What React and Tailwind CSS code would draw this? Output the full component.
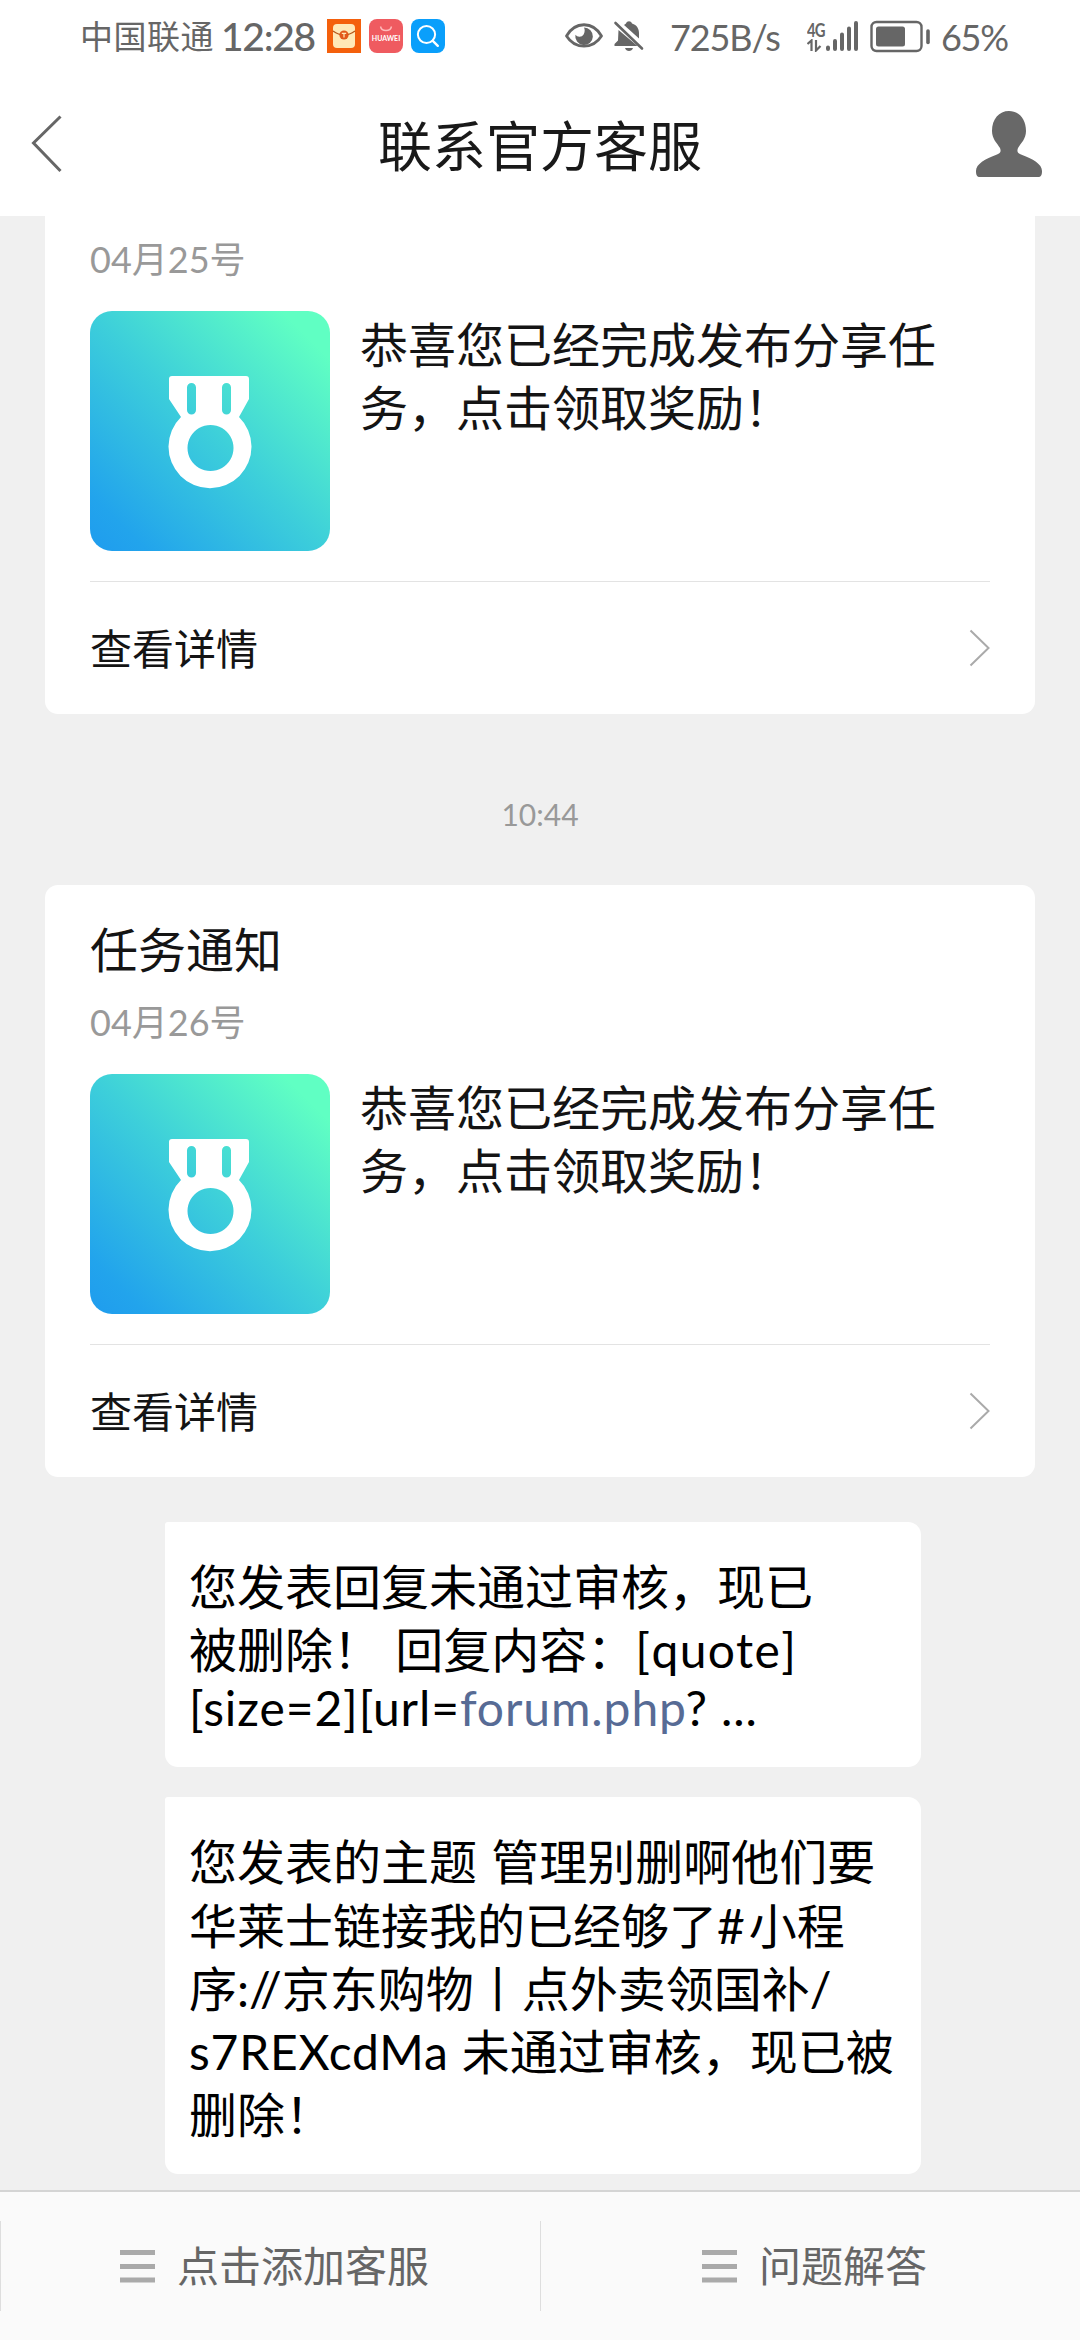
function StatusBar() {
  return (
    <div className="flex h-[72px] shrink-0 items-center pl-[80px] text-[#666]">
      <span className="w-[141px] whitespace-nowrap text-[33px] leading-[40px] tracking-[0.5px]">中国联通</span>
      <span className="w-[106px] whitespace-nowrap text-[39px] font-medium leading-[40px] tracking-[-1.3px]">12:28</span>
      <svg className="mr-2 h-[34px] w-[34px]" viewBox="0 0 34 34">
        <rect width="34" height="34" fill="#f4600c" />
        <rect x="6" y="5" width="22" height="24" rx="4" fill="#ffe9b8" />
        <path d="M6 12Q17 20 28 12" fill="none" stroke="#b5571b" strokeWidth="1.5" />
        <circle cx="17" cy="16" r="4.6" fill="#e2581b" />
        <path d="M14.8 14.4h4.4M17 14.4v4" stroke="#ffe9b8" strokeWidth="1.2" />
      </svg>
      <span className="relative mr-2 h-[34px] w-[34px] rounded-[8px] bg-[#ef5b60]">
        <svg className="absolute inset-0" viewBox="0 0 34 34">
          <path d="M11.5 7.5a5.6 5 0 0 0 11 0" fill="none" stroke="#fbb" strokeWidth="1.4" />
        </svg>
        <span className="absolute left-0 top-[15px] w-[34px] text-center text-[7px] font-bold leading-[9px] text-white">HUAWEI</span>
      </span>
      <svg className="h-[34px] w-[34px]" viewBox="0 0 34 34">
        <rect width="34" height="34" rx="8" fill="#0a9ffb" />
        <circle cx="15.5" cy="15.5" r="8.6" fill="none" stroke="#fff" strokeWidth="2" />
        <path d="M21.8 21.8l5 5" stroke="#fff" strokeWidth="2.4" strokeLinecap="round" />
      </svg>
      <svg className="ml-[119px] h-[28px] w-[40px]" viewBox="0 0 40 28">
        <path d="M2.5 14C11-1 29-1 37.500 14C29 27.500 11 27.500 2.500 14Z" fill="none" stroke="currentColor" strokeWidth="2.8" strokeLinejoin="round" />
        <path d="M20 5.500a8.800 8.800 0 1 1-8.600 7.300a5 5 0 0 0 8.200-.4c1.500-2.400 1.300-5 .4-6.900Z" fill="currentColor" />
      </svg>
      <svg className="ml-[9px] h-[34px] w-[32px]" viewBox="0 0 32 34">
        <path d="M13 4.500C14 1.500 18 1.500 19 4.500C24 6 26 10 26 14v5.500L11 6ZM5.500 11L24.500 27H1.500v-2L5 21.500ZM12 29h8c-1 4-7 4-8 0Z" fill="currentColor" />
        <path d="M2.500 4L29 29.500" stroke="currentColor" strokeWidth="2.600" strokeLinecap="round" />
      </svg>
      <span className="ml-[25px] w-[137px] whitespace-nowrap pt-[2px] text-[36px] leading-[40px] tracking-[-1.1px]">725B/s</span>
      <span className="flex w-[19px] flex-col">
        <span className="whitespace-nowrap text-[19px] font-bold leading-[18px] tracking-[-1px]">
          <span className="inline-block w-[18px] origin-left scale-x-[0.78]">4G</span>
        </span>
        <svg className="h-[13px] w-[16px]" viewBox="0 0 16 13">
          <path d="M0.500 5L4.500 1.500V12M9 1v10.500L13.500 7" fill="none" stroke="currentColor" strokeWidth="2.200" />
        </svg>
      </span>
      <svg className="-ml-px h-[32px] w-[34px]" viewBox="0 0 34 32">
        <path d="M3 27.500v1.500M10 21v8M17 14.500v14.500M24 8.500v20.500M31 3v26" stroke="currentColor" strokeWidth="4" strokeLinecap="round" />
      </svg>
      <svg className="ml-[11px] h-[33px] w-[61px]" viewBox="0 0 61 33">
        <rect x="1.500" y="2" width="50" height="29" rx="5" fill="none" stroke="currentColor" strokeWidth="2.400" />
        <rect x="6" y="6.500" width="29" height="20" rx="2.500" fill="currentColor" />
        <path d="M58 11v11.500" stroke="currentColor" strokeWidth="3.600" strokeLinecap="round" />
      </svg>
      <span className="ml-[10px] whitespace-nowrap pt-[2px] text-[36px] leading-[40px] tracking-[-1.3px]">65%</span>
    </div>
  );
}

function Header() {
  return (
    <div className="flex h-[144px] shrink-0 items-center justify-between pl-[30px] pr-[37px]">
      <svg className="h-[60px] w-[68px]" viewBox="0 0 68 60">
        <path d="M30.500 2.500L3.500 29L30.500 57" fill="none" stroke="#666" strokeWidth="3" />
      </svg>
      <h1 className="pl-[7px] pt-[6px] text-[54px] leading-[60px] text-[#191919]">联系官方客服</h1>
      <svg className="h-[68px] w-[68px]" viewBox="0 0 68 68">
        <path d="M34 1C44 1 51 9 51 21C51 29 46 33 43 38C41.500 42 43 43 46 44.500C58 49 67 54 67 61C67 65 66 67 63 67H5C2 67 1 65 1 61C1 54 10 49 22 44.500C25 43 26.500 42 25 38C22 33 17 29 17 21C17 9 24 1 34 1Z" fill="#686868" />
      </svg>
    </div>
  );
}

function Medal() {
  return (
    <div className="h-[240px] w-[240px] shrink-0 overflow-hidden rounded-[22px] bg-[linear-gradient(45deg,#1f9cee_0%,#22a4ec_12%,#3dcfda_50%,#60ffc3_90%,#60ffc3_100%)]">
      <svg viewBox="0 0 240 240">
        <path
          fillRule="evenodd"
          fill="#fff"
          d="M82 65H156Q159 65 159 68V88L149 106A41.500 41.500 0 1 1 91 106L79 88V68Q79 65 82 65ZM101.500 72a4.500 4.500 0 0 0-4.500 4.500V99a4.500 4.500 0 0 0 9 0V76.500a4.500 4.500 0 0 0-4.500-4.500ZM136.500 72a4.500 4.500 0 0 0-4.500 4.500V99a4.500 4.500 0 0 0 9 0V76.500a4.500 4.500 0 0 0-4.500-4.500ZM120.500 114a23 23 0 1 0 .01 0Z"
        />
      </svg>
    </div>
  );
}

function NoticeCard({ title, date }) {
  return (
    <section className={title ? "rounded-[13px] bg-white px-[45px] pt-[33px]" : "rounded-b-[13px] bg-white px-[45px] pt-[19px]"}>
      {title && <h2 className="mb-[17px] text-[48px] leading-[63px] text-[#141414]">{title}</h2>}
      <p className="text-[36px] leading-[48px] text-[#999]">{date}</p>
      <div className="mt-[28px] flex gap-[30px]">
        <Medal />
        <p className="mt-[2px] text-[48px] leading-[63px] text-[#141414]">
          恭喜您已经完成发布分享任
          <br />
          务，点击领取奖励！
        </p>
      </div>
      <div className="mt-[30px] flex h-[133px] items-center justify-between border-t border-[#e3e3e3]">
        <span className="pt-[2px] text-[42px] leading-[60px] text-[#141414]">查看详情</span>
        <svg className="h-[38px] w-[22px]" viewBox="0 0 22 38">
          <path d="M2.500 1.500L20.500 19L2.500 36.500" fill="none" stroke="#aaa" strokeWidth="2" />
        </svg>
      </div>
    </section>
  );
}

function Bubble({ children }) {
  return (
    <div className="ml-[120px] w-[756px] whitespace-nowrap rounded-[13px] rounded-tl-[3px] bg-white pb-[28px] pl-[24px] pt-[33px] text-[48px] leading-[63.2px] text-black">
      {children}
    </div>
  );
}

function MenuItem({ children }) {
  return (
    <div className="flex h-[90px] flex-1 items-center justify-center border-l border-[#dedede] pl-[8px]">
      <svg className="mr-[21px] h-[34px] w-[36px]" viewBox="0 0 36 34">
        <path d="M0 3.500h35M0 17.500h35M0 31h35" stroke="#aaa" strokeWidth="5" />
      </svg>
      <span className="text-[42px] leading-[60px] text-[#666]">{children}</span>
    </div>
  );
}

export default function App() {
  return (
    <div className="flex h-[2340px] w-[1080px] flex-col overflow-hidden bg-white font-[Lato,'Noto_Sans_CJK_SC',sans-serif]">
      <StatusBar />
      <Header />
      <main className="flex min-h-0 flex-1 flex-col overflow-hidden bg-[#f0f0f0] px-[45px]">
        <NoticeCard date="04月25号" />
        <p className="flex h-[171px] items-center justify-center pt-[29px] text-[30px] leading-none text-[#999]">10:44</p>
        <NoticeCard title="任务通知" date="04月26号" />
        <div className="mt-[45px] flex flex-col gap-[30px]">
          <Bubble>
            <p>您发表回复未通过审核，现已</p>
            <p>
              被删除！<span className="tracking-[2px]"> </span>回复内容：<span className="tracking-[1.4px]">[quote]</span>
            </p>
            <p className="h-[58px] leading-[54px] tracking-[0.9px]">
              [size=2][url=<span className="text-[#576b95]">forum.php</span>? ...
            </p>
          </Bubble>
          <Bubble>
            <p>
              您发表的主题<span className="tracking-[2px]"> </span>管理别删啊他们要
            </p>
            <p>
              华莱士链接我的已经够了<span className="tracking-[4px]">#</span>小程
            </p>
            <p>序://京东购物丨点外卖领国补/</p>
            <p>
              <span className="tracking-[0.8px]">s7REXcdMa </span>未通过审核，现已被
            </p>
            <p>删除！</p>
          </Bubble>
        </div>
      </main>
      <footer className="flex h-[150px] shrink-0 items-center border-t-2 border-[#d4d4d4] bg-[#fafafa]">
        <MenuItem>点击添加客服</MenuItem>
        <MenuItem>问题解答</MenuItem>
      </footer>
    </div>
  );
}
